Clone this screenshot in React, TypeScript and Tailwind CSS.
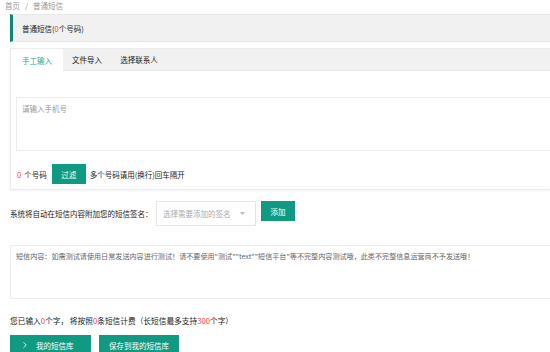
import { ChevronRight } from "lucide-react";

const FONT = { fontFamily: '"Microsoft YaHei", "Noto Sans CJK SC", "Liberation Sans", sans-serif' };

function Red({ children }: { children: React.ReactNode }) {
  return <span className="text-[#ff3b3b]">{children}</span>;
}

export default function App() {
  return (
    <div
      className="w-[550px] h-[352px] overflow-hidden bg-white text-[#222] text-[7.5px] leading-[11px]"
      style={FONT}
    >
      {/* breadcrumb */}
      <div className="pl-[5px] h-[14px] text-[#999] leading-[11px]">
        首页<span className="mx-[5px]">/</span>普通短信
      </div>

      <div className="pl-[10px]">
        {/* title bar */}
        <div className="h-[28px] flex items-center bg-[#f1f1f1] border-l-[3px] border-l-[#0b8a70] border-y border-y-[#e8e8e8] pl-[9px]">
          普通短信(<Red>0</Red>个号码)
        </div>

        {/* tabs */}
        <div className="mt-[6px] border border-[#ececec] border-r-0 shadow-[0_1px_2px_rgba(0,0,0,0.06)]">
          <div className="h-[22px] flex bg-[#f1f1f1] border-b border-[#e8e8e8]">
            <div className="w-[52px] bg-white flex items-center justify-center text-[#24a88f] h-[22px]">
              手工输入
            </div>
            <div className="w-[48px] flex items-center justify-center">文件导入</div>
            <div className="w-[56px] flex items-center justify-center">选择联系人</div>
          </div>

          <div className="pl-[5px] pt-[26px] pb-[5px]">
            <div className="h-[54px] border border-[#ececec] border-r-0 px-[5px] pt-[5px] text-[#999]">
              请输入手机号
            </div>
            <div className="mt-[13px] flex items-center h-[20px] pl-[1px]">
              <Red>0</Red>
              <span className="ml-[3px]">个号码</span>
              <button className="ml-[5px] w-[34px] h-[20px] bg-[#109a82] text-white text-[7.5px]">过滤</button>
              <span className="ml-[4px]">多个号码请用(换行)回车隔开</span>
            </div>
          </div>
        </div>

        {/* signature */}
        <div className="mt-[11px] flex items-start h-[25px]">
          <span className="mt-[7px] w-[146px]">系统将自动在短信内容附加您的短信签名：</span>
          <div className="w-[100px] h-[25px] border border-[#e6e6e6] flex items-center justify-between pl-[6px] pr-[10px] text-[#aaa]">
            <span>选择需要添加的签名</span>
            <svg width="5" height="3" viewBox="0 0 5 3">
              <path d="M0 0h5L2.5 3z" fill="#bbb" />
            </svg>
          </div>
          <button className="ml-[5px] w-[34px] h-[20px] bg-[#109a82] text-white text-[7.5px]">添加</button>
        </div>

        {/* content */}
        <div className="mt-[19px] h-[54px] border border-[#ececec] border-r-0 pl-[5px] pt-[5px] text-[#666] text-[7.1px]">
          短信内容：如需测试请使用日常发送内容进行测试！请不要使用"测试""text""短信平台"等不完整内容测试哦，此类不完整信息运营商不予发送哦！
        </div>

        <div className="mt-[16px] text-[7.7px]">
          您已输入<Red>0</Red>个字， 将按照<Red>0</Red>条短信计费（长短信最多支持<Red>300</Red>个字）
        </div>

        <div className="mt-[9px] flex gap-[8px]">
          <button className="w-[81px] h-[20px] bg-[#109a82] text-white text-[7.5px] flex items-center pl-[10px]">
            <ChevronRight size={10} strokeWidth={2} className="mr-[6px]" />
            我的短信库
          </button>
          <button className="w-[80px] h-[20px] bg-[#109a82] text-white text-[7.5px]">保存到我的短信库</button>
        </div>
      </div>
    </div>
  );
}
